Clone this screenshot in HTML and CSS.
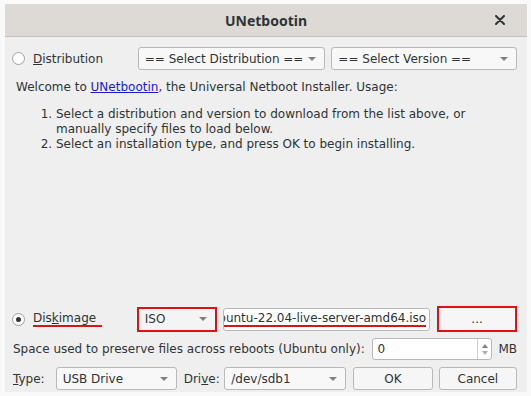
FILE: index.html
```html
<!DOCTYPE html>
<html lang="en">
<head>
  <meta charset="UTF-8">
  <title>UNetbootin</title>
  <link rel="stylesheet" href="styles.css">
</head>
<body>
  <div class="window">
    <div class="titlebar">
      <span class="title">UNetbootin</span>
      <svg class="close" width="10" height="10" viewBox="0 0 10 10"><path d="M1 1 L9 9 M9 1 L1 9" stroke="#2e3436" stroke-width="2" stroke-linecap="round"/></svg>
    </div>
    <div class="content">
      <div class="row top-row">
        <label class="radio-label dist-label"><span class="radio"></span><span><u>D</u>istribution</span></label>
        <div class="combo dist-combo"><span>== Select Distribution ==</span><span class="arrow"></span></div>
        <div class="combo ver-combo"><span>== Select Version ==</span><span class="arrow"></span></div>
      </div>

      <div class="info">
        <p>Welcome to <a href="#">UNetbootin</a>, the Universal Netboot Installer. Usage:</p>
        <ol>
          <li>Select a distribution and version to download from the list above, or manually specify files to load below.</li>
          <li>Select an installation type, and press OK to begin installing.</li>
        </ol>
      </div>

      <div class="row disk-row">
        <label class="radio-label disk-label"><span class="radio checked"></span><span class="marked">Dis<u>k</u>image</span></label>
        <div class="combo iso-combo marked-box"><span>ISO</span><span class="arrow"></span></div>
        <div class="field path-field"><span class="marked-text">ubuntu-22.04-live-server-amd64.iso</span></div>
        <div class="button browse marked-box">...</div>
      </div>

      <div class="row space-row">
        <span class="space-text">Space used to preserve files across reboots (Ubuntu only):</span>
        <div class="spin"><span>0</span><span class="spin-arrows"><span class="up"></span><span class="down"></span></span></div>
        <span class="unit">MB</span>
      </div>

      <div class="row bottom-row">
        <span class="lbl"><u>T</u>ype:</span>
        <div class="combo type-combo"><span>USB Drive</span><span class="arrow"></span></div>
        <span class="lbl">Dri<u>v</u>e:</span>
        <div class="combo drive-combo"><span>/dev/sdb1</span><span class="arrow"></span></div>
        <div class="button ok">OK</div>
        <div class="button cancel">Cancel</div>
      </div>
    </div>
  </div>
</body>
</html>
```

FILE: styles.css
```css
* {
  box-sizing: border-box;
  margin: 0;
  padding: 0;
}
body {
  background-color: #f9f9f9;
  font-family: 'DejaVu Sans', sans-serif;
  font-size: 12px;
  color: #2e3436;
  padding: 4px 4px 4px 5px;
}
.window {
  width: 522px;
  height: 388px;
  background-color: #efefef;
  display: flex;
  flex-direction: column;
}
.titlebar {
  height: 33px;
  background-color: #dddad6;
  border-bottom: 1px solid #c4c1bc;
  position: relative;
  display: flex;
  align-items: center;
  justify-content: center;
}
.title {
  font-family: 'Noto Sans', sans-serif;
  font-weight: 700;
  font-size: 14px;
  color: #2e3436;
}
.close {
  position: absolute;
  right: 22px;
  top: 11px;
}
.content {
  flex: 1;
  display: flex;
  flex-direction: column;
  padding: 10px 10px 2px 7px;
}
.row {
  display: flex;
  align-items: center;
}
.radio-label {
  display: flex;
  align-items: center;
  gap: 8px;
}
.radio {
  width: 13px;
  height: 13px;
  border: 1px solid #a0a0a0;
  border-radius: 50%;
  background: #fff;
  position: relative;
}
.radio.checked::after {
  content: "";
  position: absolute;
  left: 3px;
  top: 3px;
  width: 5px;
  height: 5px;
  border-radius: 50%;
  background: #2e3436;
}
.combo {
  height: 23px;
  background: #f8f8f8;
  border: 1px solid #b8b8b8;
  border-radius: 3px;
  display: flex;
  align-items: center;
  justify-content: space-between;
  padding: 0 8px 0 6px;
}
.arrow {
  width: 0;
  height: 0;
  border-left: 4px solid transparent;
  border-right: 4px solid transparent;
  border-top: 4px solid #808080;
}
.top-row {
  height: 23px;
}
.dist-label {
  width: 126px;
}
.dist-combo {
  width: 188px;
}
.ver-combo {
  width: 186px;
  margin-left: 6px;
}
.info {
  flex: 1;
  padding: 10px 0 0 4px;
  line-height: 15px;
}
.info a {
  color: #1a1acf;
}
.info ol {
  margin-top: 12px;
  padding-left: 40px;
}
.disk-row {
  height: 26px;
  margin-top: 1px;
}
.disk-label {
  width: 125px;
}
.marked {
  border-bottom: 2px solid #d01818;
  padding-right: 6px;
  line-height: 14px;
}
.iso-combo {
  width: 80px;
  height: 25px;
  background: #f4f4f4;
}
.field {
  background: #fff;
  border: 1px solid #b8b8b8;
  border-radius: 3px;
  height: 23px;
  display: flex;
  align-items: center;
}
.path-field {
  width: 208px;
  margin-left: 6px;
  overflow: hidden;
  justify-content: flex-end;
  padding-right: 3px;
  white-space: nowrap;
}
.marked-text {
  border-bottom: 2px solid #d01818;
  line-height: 14px;
}
.button {
  height: 23px;
  background: #f6f6f6;
  border: 1px solid #b8b8b8;
  border-radius: 3px;
  display: flex;
  align-items: center;
  justify-content: center;
}
.browse {
  width: 80px;
  height: 26px;
  margin-left: 7px;
}
.marked-box {
  border: 2px solid #d81414;
  border-radius: 0;
}
.space-row {
  height: 22px;
  margin-top: 6px;
}
.space-text {
  padding-left: 1px;
  width: 363px;
}
.spin {
  width: 122px;
  height: 22px;
  background: #fff;
  border: 1px solid #b8b8b8;
  border-radius: 3px;
  display: flex;
  align-items: center;
  justify-content: space-between;
  padding-left: 5px;
}
.spin-arrows {
  width: 14px;
  height: 100%;
  border-left: 1px solid #d0d0d0;
  display: flex;
  flex-direction: column;
  align-items: center;
  justify-content: center;
  gap: 3px;
}
.up {
  border-left: 3px solid transparent;
  border-right: 3px solid transparent;
  border-bottom: 4px solid #808080;
}
.down {
  border-left: 3px solid transparent;
  border-right: 3px solid transparent;
  border-top: 4px solid #b0b0b0;
}
.unit {
  margin-left: 6px;
}
.bottom-row {
  height: 23px;
  margin-top: 7px;
}
.bottom-row .lbl {
  padding-left: 1px;
  width: 44px;
}
.type-combo {
  width: 122px;
  margin-right: 6px;
}
.drive-combo {
  width: 123px;
  margin-left: -2px;
}
.ok {
  width: 80px;
  margin-left: 7px;
}
.cancel {
  width: 79px;
  margin-left: 6px;
}
```
